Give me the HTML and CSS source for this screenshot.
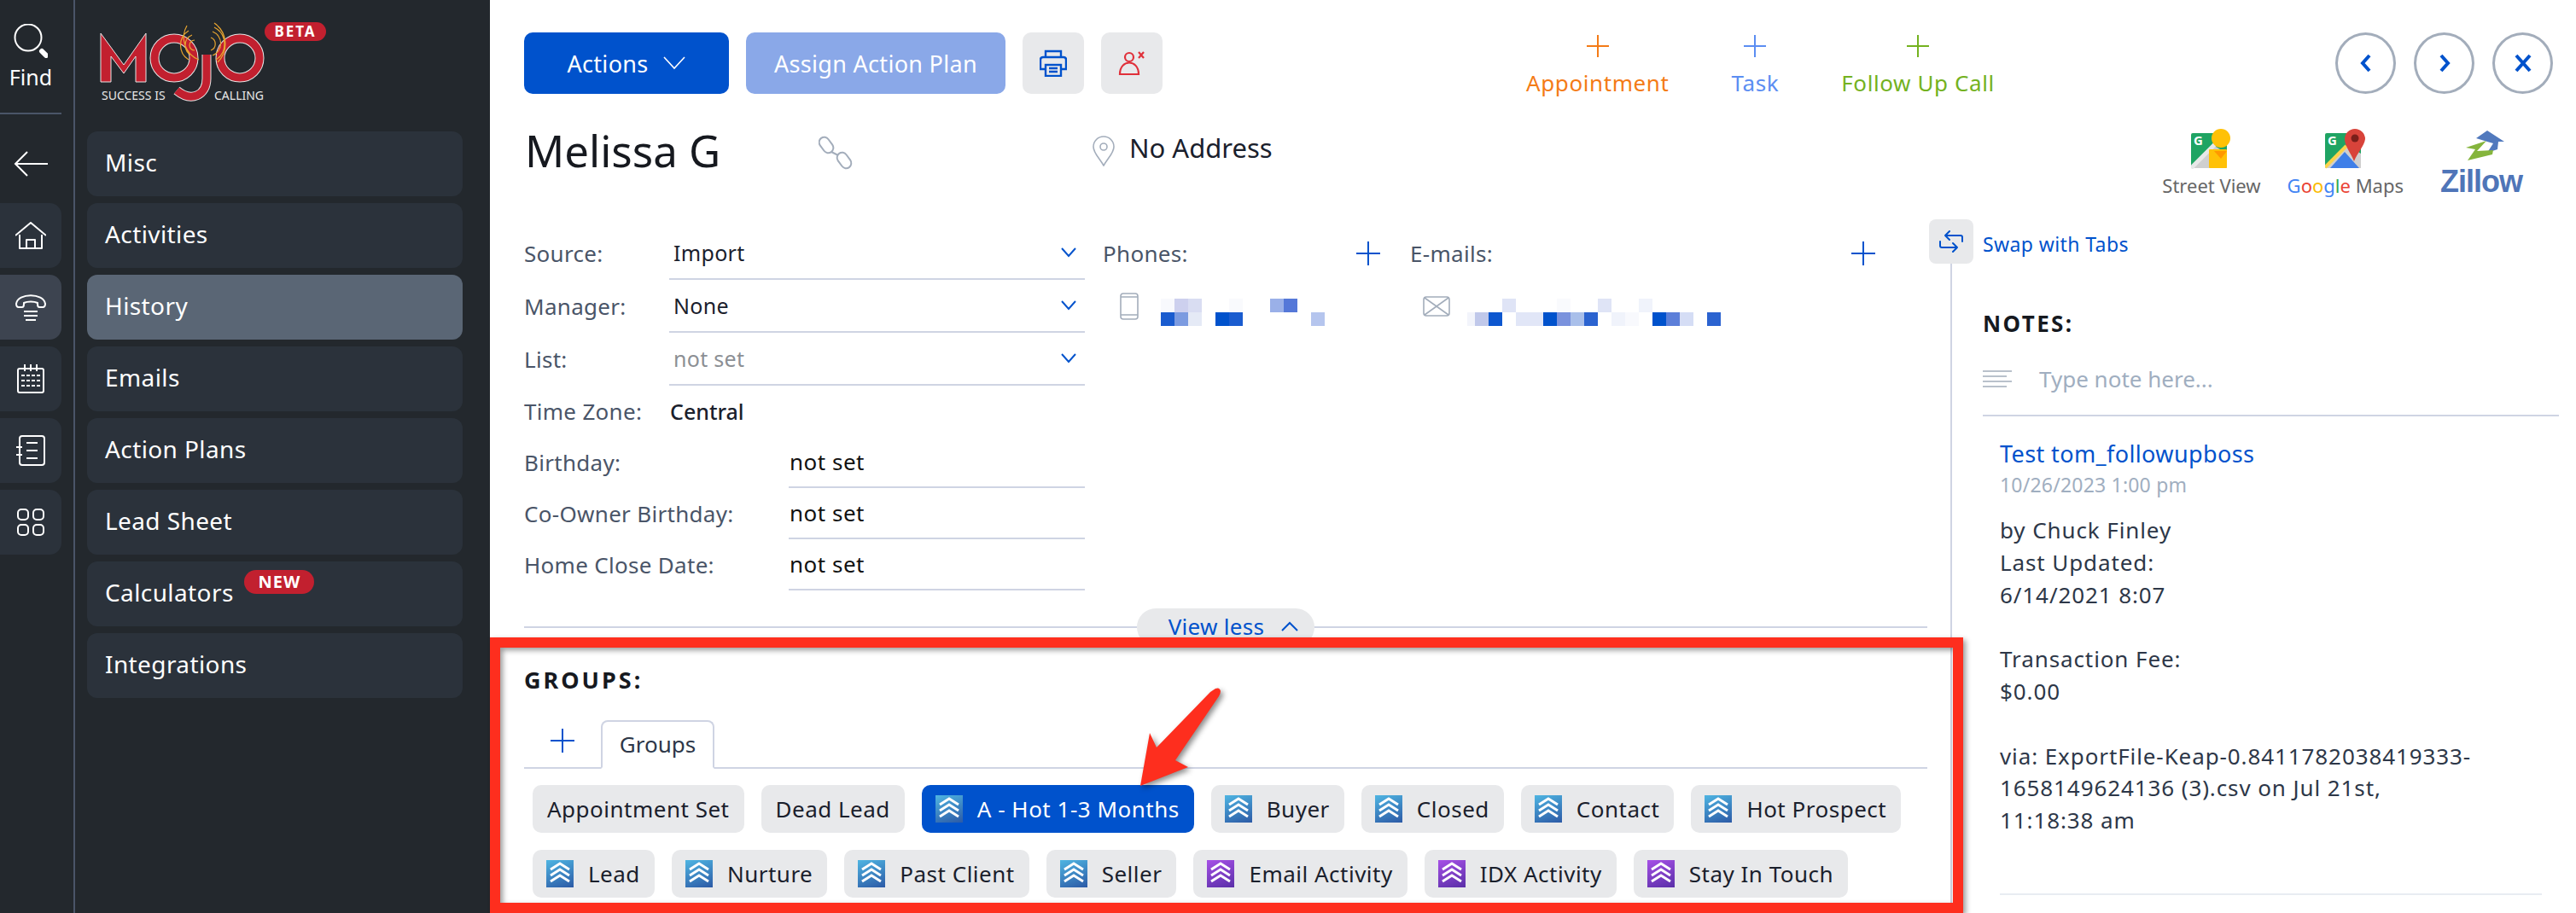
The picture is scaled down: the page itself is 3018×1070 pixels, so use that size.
FILE: index.html
```html
<!DOCTYPE html>
<html lang="en">
<head>
<meta charset="utf-8">
<title>Melissa G</title>
<link rel="stylesheet" href="styles.css">
</head>
<body>
<svg class="sprite" width="0" height="0"><symbol id="chev3" viewBox="0 0 32 32"><path d="M5 11L16 4l11 7M5 18l11-7 11 7M5 25l11-7 11 7" fill="none" stroke="#fff" stroke-width="3"/></symbol></svg>
<div class="app">
  <aside class="sidebar">
    <nav class="rail">
      <div class="find">
        <svg class="find-icon" width="40" height="40" viewBox="0 0 40 40" fill="none" stroke="#fff"><circle cx="17" cy="16" r="15.5" stroke-width="2"/><path d="M33 32l5 5" stroke-width="6" stroke-linecap="round"/></svg>
        <span>Find</span>
      </div>
      <div class="back">
        <svg width="40" height="30" viewBox="0 0 40 30" fill="none" stroke="#fff" stroke-width="2"><path d="M16 1L2 15l14 14M2 15h38"/></svg>
      </div>
      <div class="rail-btn">
        <svg width="36" height="32" viewBox="0 0 36 32" fill="none" stroke="#fff" stroke-width="2" stroke-linejoin="round"><path d="M0 16L18 1l18 15"/><path d="M5 15v16h26V15"/><path d="M13 31V21h10v10"/></svg>
      </div>
      <div class="rail-btn rail-active">
        <svg width="36" height="32" viewBox="0 0 36 32" fill="none" stroke="#fff" stroke-width="2" stroke-linejoin="round"><path d="M1 12C3-1 33-1 35 12c0 3-1 4-3 4h-4c-2 0-2-2-2-5-4-2-12-2-16 0 0 3 0 5-2 5H4c-2 0-3-1-3-4z"/><path d="M10 21h16M10 26h16M12 31h12"/></svg>
      </div>
      <div class="rail-btn">
        <svg width="32" height="34" viewBox="0 0 32 34" fill="none" stroke="#fff" stroke-width="2"><rect x="1" y="5" width="30" height="28" rx="2"/><path d="M9 0v8M16 0v8M23 0v8"/><path d="M5 13h22M5 19h22M5 25h22" stroke-dasharray="4 2"/></svg>
      </div>
      <div class="rail-btn">
        <svg width="34" height="36" viewBox="0 0 34 36" fill="none" stroke="#fff" stroke-width="2"><rect x="4" y="1" width="29" height="34" rx="3"/><path d="M0 14h7M0 23h7M12 9h13M12 18h13M12 27h13"/></svg>
      </div>
      <div class="rail-btn">
        <svg width="32" height="32" viewBox="0 0 32 32" fill="none" stroke="#fff" stroke-width="2"><rect x="1" y="1" width="12" height="12" rx="4"/><rect x="19" y="1" width="12" height="12" rx="4"/><rect x="1" y="19" width="12" height="12" rx="4"/><rect x="19" y="19" width="12" height="12" rx="4"/></svg>
      </div>
    </nav>
    <div class="menu">
      <div class="logo">
        <svg class="logo-mark" width="196" height="96" viewBox="0 0 196 96" fill="none">
          <g stroke="#e6e6e6" stroke-width="1">
            <path d="M1 13L28 50 54 13V70H42V40L28 60 13 40V70H1z" fill="#c2202f"/>
          </g>
          <circle cx="87" cy="42" r="23" stroke="#e6e6e6" stroke-width="11"/>
          <circle cx="87" cy="42" r="23" stroke="#c2202f" stroke-width="9"/>
          <circle cx="164" cy="42" r="23" stroke="#e6e6e6" stroke-width="11"/>
          <circle cx="164" cy="42" r="23" stroke="#c2202f" stroke-width="9"/>
          <path d="M125 38V66C125 86 107 94 90 80" stroke="#e6e6e6" stroke-width="11"/>
          <path d="M125 38V66C125 86 107 94 90 80" stroke="#c2202f" stroke-width="9"/>
          <g stroke="#e8a530" stroke-width="1.2">
            <path d="M111 21a6 6 0 0 0 0 12M108 15a13 13 0 0 0 0 24M104 10a20 20 0 0 0 0 34M102 4a28 28 0 0 0 14 40"/>
            <path d="M130 18a8 8 0 0 1 0 15M132 11a15 15 0 0 1 0 28M134 6a22 22 0 0 1 2 38M134 1a30 30 0 0 1 4 46"/>
          </g>
        </svg>
        <span class="tag-left">SUCCESS IS</span>
        <span class="tag-right">CALLING</span>
        <span class="beta">BETA</span>
      </div>
      <a class="menu-item">Misc</a>
      <a class="menu-item">Activities</a>
      <a class="menu-item menu-active">History</a>
      <a class="menu-item">Emails</a>
      <a class="menu-item">Action Plans</a>
      <a class="menu-item">Lead Sheet</a>
      <a class="menu-item">Calculators <span class="new">NEW</span></a>
      <a class="menu-item">Integrations</a>
    </div>
  </aside>

  <main class="main">
    <div class="toolbar">
      <button class="btn btn-primary">Actions
        <svg width="26" height="16" viewBox="0 0 26 16" fill="none" stroke="#fff" stroke-width="1.6"><path d="M1 1l12 13L25 1"/></svg>
      </button>
      <button class="btn btn-faded">Assign Action Plan</button>
      <button class="btn-square">
        <svg width="32" height="32" viewBox="0 0 32 32" fill="none" stroke="#0052cc" stroke-width="2.4"><path d="M7 9V2h18v7"/><path d="M7 23H1V12q0-3 3-3h24q3 0 3 3v11h-6"/><rect x="7" y="18" width="18" height="13"/><path d="M11 22h10M11 26h10"/></svg>
      </button>
      <button class="btn-square">
        <svg width="32" height="30" viewBox="0 0 32 30" fill="none" stroke="#e0303a" stroke-width="2.2"><circle cx="13" cy="8" r="5"/><path d="M2 28c0-18 22-18 22 0z"/><path d="M24 2l6 7M30 2l-6 7"/></svg>
      </button>
      <div class="quick">
        <div class="quick-item q-orange"><svg width="26" height="26" viewBox="0 0 26 26"><path d="M13 0v26M0 13h26"/></svg><span>Appointment</span></div>
        <div class="quick-item q-blue"><svg width="26" height="26" viewBox="0 0 26 26"><path d="M13 0v26M0 13h26"/></svg><span>Task</span></div>
        <div class="quick-item q-green"><svg width="26" height="26" viewBox="0 0 26 26"><path d="M13 0v26M0 13h26"/></svg><span>Follow Up Call</span></div>
      </div>
      <div class="pager">
        <button class="circle"><svg width="14" height="22" viewBox="0 0 14 22"><path d="M11 2L3 11l8 9"/></svg></button>
        <button class="circle"><svg width="14" height="22" viewBox="0 0 14 22"><path d="M3 2l8 9-8 9"/></svg></button>
        <button class="circle"><svg width="22" height="22" viewBox="0 0 22 22"><path d="M3 2l16 18M19 2L3 20"/></svg></button>
      </div>
    </div>

    <div class="head">
      <h1 class="name">Melissa G</h1>
      <svg class="link-icon" width="40" height="40" viewBox="0 0 40 40" fill="none" stroke="#a3adbb" stroke-width="2"><rect x="-6" y="-10" width="12" height="20" rx="6" transform="translate(9 11) rotate(-36)"/><rect x="-6" y="-10" width="12" height="20" rx="6" transform="translate(30 29) rotate(-36)"/><path d="M15 19l8 4"/></svg>
      <svg class="pin" width="28" height="36" viewBox="0 0 28 36" fill="none" stroke="#a3adbb" stroke-width="1.6"><path d="M14 35C8 25 2 20 2 13a12 12 0 0 1 24 0c0 7-6 12-12 22z"/><circle cx="14" cy="13" r="4"/></svg>
      <span class="address">No Address</span>
      <div class="maps">
        <div class="map-link">
          <svg width="47" height="47" viewBox="0 0 47 47"><rect y="5" width="42" height="41" rx="2" fill="#1fa463"/><path d="M0 44L26 19l16 10v17H2q-2 0-2-2z" fill="#cfcfcf"/><path d="M0 46L30 16" stroke="#e8e8e8" stroke-width="5"/><rect x="21" y="24" width="21" height="22" rx="1" fill="#ffc107"/><path d="M27 26h15l-7 9z" fill="#ff9800"/><circle cx="35" cy="11" r="11" fill="#ffc107"/><text class="g-letter" x="3" y="19">G</text></svg>
          <span class="map-label">Street View</span>
        </div>
        <div class="map-link">
          <svg width="47" height="47" viewBox="0 0 47 47"><rect y="5" width="42" height="41" rx="2" fill="#1fa463"/><path d="M0 44L26 19l16 10v17H2q-2 0-2-2z" fill="#cfcfcf"/><path d="M6 46l17-19 17 19z" fill="#3f7fe8"/><path d="M0 45L25 20" stroke="#fbd34b" stroke-width="4"/><path d="M35 38C31 28 24 20 24 12a12 12 0 0 1 24 0C47 20 39 28 35 38z" transform="translate(-1 0)" fill="#d8433a"/><circle cx="35" cy="11" r="4.5" fill="#7a1f1a"/><text class="g-letter" x="3" y="19">G</text></svg>
          <span class="map-label"><span class="g-b">G</span><span class="g-r">o</span><span class="g-y">o</span><span class="g-b">g</span><span class="g-g">l</span><span class="g-r">e</span> Maps</span>
        </div>
        <div class="map-link map-zillow">
          <svg class="zillow-mark" width="46" height="36" viewBox="0 0 46 36"><path d="M12 9L25 0l20 13h-7l-1 9-12 4 7-11-7-2z" fill="#5179bd"/><path d="M0 20L24 12 13 24l19-1-1 5L2 35l9-13z" fill="#85b53d"/></svg>
          <span class="zillow">Zillow</span>
        </div>
      </div>
    </div>

    <div class="content">
      <section class="details">
        <div class="fields">
          <div class="form">
            <div class="row"><span class="label">Source:</span><div class="select"><span>Import</span><svg class="chev" width="18" height="12" viewBox="0 0 18 12"><path d="M1 1l8 9 8-9"/></svg></div></div>
            <div class="row"><span class="label">Manager:</span><div class="select"><span>None</span><svg class="chev" width="18" height="12" viewBox="0 0 18 12"><path d="M1 1l8 9 8-9"/></svg></div></div>
            <div class="row"><span class="label">List:</span><div class="select is-empty"><span>not set</span><svg class="chev" width="18" height="12" viewBox="0 0 18 12"><path d="M1 1l8 9 8-9"/></svg></div></div>
            <div class="row row-s"><span class="label">Time Zone:</span><span class="plain">Central</span></div>
            <div class="row row-s"><span class="label label-w">Birthday:</span><div class="input">not set</div></div>
            <div class="row row-s"><span class="label label-w">Co-Owner Birthday:</span><div class="input">not set</div></div>
            <div class="row row-s"><span class="label label-w">Home Close Date:</span><div class="input">not set</div></div>
          </div>
          <div class="contact phones">
            <div class="contact-head"><span class="label">Phones:</span><svg class="plus-blue" width="28" height="28" viewBox="0 0 28 28"><path d="M14 0v28M0 14h28"/></svg></div>
            <div class="contact-row">
              <svg class="ic-phone" width="22" height="32" viewBox="0 0 22 32" fill="none" stroke="#a3adbb" stroke-width="1.6"><rect x="1" y="1" width="20" height="30" rx="3"/><path d="M1 5h20M1 26h20"/></svg>
              <svg width="192" height="32" viewBox="0 0 192 32"><rect x="0" width="16" height="16" fill="#f8f9fd"/><rect x="16" width="16" height="16" fill="#cdd0ee"/><rect x="32" width="16" height="16" fill="#d9ddf2"/><rect x="80" width="16" height="16" fill="#f9fafd"/><rect x="128" width="16" height="16" fill="#9ab0e8"/><rect x="144" width="16" height="16" fill="#5578d8"/><rect x="0" y="16" width="16" height="16" fill="#1a5ccf"/><rect x="16" y="16" width="16" height="16" fill="#7c9be0"/><rect x="32" y="16" width="16" height="16" fill="#e5eaf6"/><rect x="64" y="16" width="16" height="16" fill="#0052cc"/><rect x="80" y="16" width="16" height="16" fill="#1a5ccf"/><rect x="176" y="16" width="16" height="16" fill="#b5c5ee"/></svg>
            </div>
          </div>
          <div class="contact emails">
            <div class="contact-head"><span class="label">E-mails:</span><svg class="plus-blue" width="28" height="28" viewBox="0 0 28 28"><path d="M14 0v28M0 14h28"/></svg></div>
            <div class="contact-row">
              <svg class="ic-mail" width="32" height="24" viewBox="0 0 32 24" fill="none" stroke="#a3adbb" stroke-width="1.6"><rect x="1" y="1" width="30" height="22" rx="3"/><path d="M2 2l28 20M30 2L2 22"/></svg>
              <svg class="mosaic-mail" width="304" height="32" viewBox="0 0 304 32"><rect x="41" width="16" height="16" fill="#dfe4f6"/><rect x="105" width="16" height="16" fill="#f9fafd"/><rect x="153" width="16" height="16" fill="#dfe4f6"/><rect x="201" width="16" height="16" fill="#f0f3fb"/><rect x="0" y="16" width="9" height="16" fill="#f2f4fb"/><rect x="9" y="16" width="16" height="16" fill="#c0c8ea"/><rect x="25" y="16" width="16" height="16" fill="#0d57cf"/><rect x="57" y="16" width="32" height="16" fill="#e1e6f7"/><rect x="89" y="16" width="16" height="16" fill="#0052cc"/><rect x="105" y="16" width="16" height="16" fill="#7a92dd"/><rect x="121" y="16" width="16" height="16" fill="#a9bfea"/><rect x="137" y="16" width="16" height="16" fill="#2b63d0"/><rect x="169" y="16" width="16" height="16" fill="#f0f3fb"/><rect x="185" y="16" width="16" height="16" fill="#f8f9fd"/><rect x="217" y="16" width="16" height="16" fill="#0052cc"/><rect x="233" y="16" width="16" height="16" fill="#5c7fd9"/><rect x="249" y="16" width="16" height="16" fill="#d5ddf5"/><rect x="281" y="16" width="16" height="16" fill="#2b63d0"/></svg>
            </div>
          </div>
        </div>

        <div class="divider">
          <span class="rule"></span>
          <button class="viewless">View less <svg width="20" height="12" viewBox="0 0 20 12" fill="none" stroke="#0052cc" stroke-width="2"><path d="M1 11l9-9 9 9"/></svg></button>
          <span class="rule"></span>
        </div>

        <h2 class="section-title">GROUPS:</h2>
        <div class="tabs">
          <svg class="plus-blue tab-plus" width="28" height="28" viewBox="0 0 28 28"><path d="M14 0v28M0 14h28"/></svg>
          <div class="tab">Groups</div>
        </div>
        <div class="chips">
          <span class="chip">Appointment Set</span>
          <span class="chip">Dead Lead</span>
          <span class="chip chip-on"><svg class="badge"><use href="#chev3"/></svg>A - Hot 1-3 Months</span>
          <span class="chip"><svg class="badge"><use href="#chev3"/></svg>Buyer</span>
          <span class="chip"><svg class="badge"><use href="#chev3"/></svg>Closed</span>
          <span class="chip"><svg class="badge"><use href="#chev3"/></svg>Contact</span>
          <span class="chip"><svg class="badge"><use href="#chev3"/></svg>Hot Prospect</span>
          <span class="chip"><svg class="badge"><use href="#chev3"/></svg>Lead</span>
          <span class="chip"><svg class="badge"><use href="#chev3"/></svg>Nurture</span>
          <span class="chip"><svg class="badge"><use href="#chev3"/></svg>Past Client</span>
          <span class="chip"><svg class="badge"><use href="#chev3"/></svg>Seller</span>
          <span class="chip"><svg class="badge badge-p"><use href="#chev3"/></svg>Email Activity</span>
          <span class="chip"><svg class="badge badge-p"><use href="#chev3"/></svg>IDX Activity</span>
          <span class="chip"><svg class="badge badge-p"><use href="#chev3"/></svg>Stay In Touch</span>
        </div>
      </section>

      <aside class="side">
        <div class="swap">
          <span class="swap-btn"><svg width="30" height="26" viewBox="0 0 30 26" fill="none" stroke="#0052cc" stroke-width="2" stroke-linecap="round" stroke-linejoin="round"><path d="M28 13V8q0-2-2-2H8M13 1L8 6l5 5"/><path d="M2 13v5q0 2 2 2h18M17 15l5 5-5 5"/></svg></span>
          <a class="swap-text">Swap with Tabs</a>
        </div>
        <div class="notes">
          <h2 class="notes-title">NOTES:</h2>
          <div class="note-input">
            <svg width="34" height="20" viewBox="0 0 34 20" stroke="#a3adbb" stroke-width="1.6"><path d="M0 1h34M0 7h28M0 13h34M0 19h28"/></svg>
            <span>Type note here...</span>
          </div>
          <article class="note">
            <a class="note-author">Test tom_followupboss</a>
            <div class="note-date">10/26/2023 1:00 pm</div>
            <p class="note-body">by Chuck Finley<br>Last Updated:<br>6/14/2021 8:07<br><br>Transaction Fee:<br>$0.00<br><br>via: ExportFile-Keap-0.8411782038419333-1658149624136 (3).csv on Jul 21st, 11:18:38 am</p>
          </article>
        </div>
      </aside>
    </div>
  </main>

  <div class="red-frame"></div>
  <svg class="red-arrow" width="110" height="120" viewBox="0 0 110 120"><path d="M93 4q5-2 6 3 0 3-2 6L46 88 61 96 5 118 16 56l8 17L87 8z" fill="#fe2e1e"/></svg>
</div>
</body>
</html>
```

FILE: styles.css
```css
* { box-sizing: border-box; }
html, body { margin: 0; padding: 0; background: #fff; }
body { font-family: "Noto Sans", "Open Sans", sans-serif; color: #1a202c; }
button { font: inherit; border: 0; padding: 0; }
h1, h2, p { margin: 0; font-weight: normal; }
svg { display: block; flex: none; }
.sprite { position: absolute; }

.app { position: relative; display: flex; width: 3018px; height: 1070px; overflow: hidden; }

/* sidebar */
.sidebar { display: flex; flex: none; width: 574px; height: 100%; background: #23282d; color: #fff; }
.rail { flex: none; width: 88px; padding-right: 14px; border-right: 2px solid #4a5568; }
.find { display: flex; flex-direction: column; align-items: center; height: 134px; padding-top: 28px; border-bottom: 2px solid #4a5568; font-size: 25px; line-height: 30px; }
.find-icon { margin-bottom: 7px; }
.back { display: flex; align-items: center; justify-content: center; height: 104px; padding-top: 12px; }
.rail-btn { display: flex; align-items: center; justify-content: center; height: 76px; margin-bottom: 8px; background: #2b323b; border-radius: 0 14px 14px 0; }
.rail-active { background: #3d4450; }

.menu { flex: none; width: 440px; margin-left: 14px; }
.logo { position: relative; height: 154px; }
.logo-mark { position: absolute; left: 15px; top: 26px; }
.tag-left, .tag-right { position: absolute; top: 104px; font-size: 14px; line-height: 16px; color: #e8e8e8; white-space: nowrap; }
.tag-left { left: 17px; }
.tag-right { left: 149px; }
.beta { position: absolute; left: 208px; top: 26px; width: 72px; height: 22px; border-radius: 11px; background: #c2202f; font-size: 17px; font-weight: 700; line-height: 22px; letter-spacing: 2px; text-align: center; }
.menu-item { display: flex; align-items: center; height: 76px; margin-bottom: 8px; padding: 0 0 4px 21px; border-radius: 12px; background: #2b323b; font-size: 28px; letter-spacing: .4px; white-space: pre; }
.menu-active { background: #5a6675; }
.new { height: 28px; margin: 0 0 25px 5px; padding: 0 16px; border-radius: 14px; background: #c2202f; font-size: 20px; font-weight: 700; line-height: 28px; letter-spacing: 1px; }

/* main */
.main { flex: 1; min-width: 0; padding: 38px 0 0 40px; }
.toolbar { display: flex; align-items: flex-start; height: 72px; }
.btn { display: flex; align-items: center; justify-content: center; height: 72px; border-radius: 10px; color: #fff; font-size: 27px; letter-spacing: .3px; }
.btn-primary { width: 240px; margin-right: 20px; background: #0052cc; gap: 18px; }
.btn-faded { width: 304px; margin-right: 20px; background: #8aa8e8; }
.btn-square { display: flex; align-items: center; justify-content: center; width: 72px; height: 72px; margin-right: 20px; border-radius: 10px; background: #e8e9eb; }
.quick { display: flex; gap: 73px; margin-left: 406px; padding-top: 3px; }
.quick-item { display: flex; flex-direction: column; align-items: center; gap: 12px; font-size: 26px; line-height: 36px; letter-spacing: .6px; }
.quick-item path { fill: none; stroke: currentColor; stroke-width: 2; }
.q-orange { color: #f47b16; }
.q-blue { color: #5b8df2; }
.q-green { color: #74b21f; }
.pager { display: flex; gap: 21px; margin-left: auto; padding-right: 27px; }
.circle { display: flex; align-items: center; justify-content: center; width: 71px; height: 72px; border: 3px solid #a3adbb; border-radius: 50%; background: #fff; }
.circle path { fill: none; stroke: #0052cc; stroke-width: 4; }

.head { display: flex; align-items: flex-start; height: 147px; }
.name { width: 345px; margin-top: 36px; padding-left: 1px; font-size: 51px; line-height: 60px; color: #16191f; }
.link-icon { margin-top: 49px; }
.pin { margin: 49px 16px 0 280px; }
.address { margin-top: 44px; font-size: 31px; line-height: 38px; }
.maps { display: flex; align-items: flex-start; margin-left: auto; padding: 41px 63px 0 0; }
.map-link { display: flex; flex-direction: column; align-items: center; margin-left: 31px; }
.map-zillow { margin-left: 43px; }
.map-label { margin-top: 4px; font-family: "Noto Sans", sans-serif; font-size: 22px; line-height: 30px; color: #666; white-space: nowrap; }
.g-letter { font-family: "Noto Sans", sans-serif; font-size: 15px; font-weight: 700; fill: #fff; }
.g-b { color: #4285f4; }
.g-r { color: #ea4335; }
.g-y { color: #fbbc05; }
.g-g { color: #34a853; }
.zillow-mark { margin: 2px 0 6px 10px; }
.zillow { font-family: "Liberation Sans", sans-serif; font-size: 36px; font-weight: 700; line-height: 36px; letter-spacing: -1px; color: #4f75b8; }

.content { display: flex; }
.details { flex: none; width: 1644px; padding-top: 9px; }
.fields { display: flex; height: 426px; }
.form { flex: none; width: 657px; }
.row { display: flex; align-items: stretch; height: 62px; font-size: 26px; letter-spacing: .3px; }
.row-s { height: 60px; }
.label { display: flex; align-items: center; width: 170px; color: #4a5568; white-space: nowrap; }
.label-w { width: 310px; }
.select { display: flex; flex: 1; align-items: center; justify-content: space-between; padding: 0 10px 0 5px; border-bottom: 2px solid #cfd4e3; color: #1a202c; font-size: 25px; }
.is-empty { color: #8c8f94; }
.chev path { fill: none; stroke: #0052cc; stroke-width: 2; }
.plain { display: flex; align-items: center; margin-left: 1px; font-size: 25px; font-weight: 500; letter-spacing: 0; }
.input { display: flex; flex: 1; align-items: center; padding-left: 1px; border-bottom: 2px solid #cfd4e3; color: #111; letter-spacing: .5px; }

.contact-head { display: flex; align-items: center; justify-content: space-between; height: 62px; }
.contact-head .label { width: auto; font-size: 26px; letter-spacing: .3px; }
.plus-blue path { fill: none; stroke: #0052cc; stroke-width: 2; }
.contact-row { display: flex; align-items: flex-start; margin-top: 15px; }
.phones { flex: none; width: 325px; margin-left: 21px; }
.phones .contact-row { padding-left: 20px; }
.phones .ic-phone { margin-right: 26px; }
.phones .contact-row svg + svg { margin-top: 7px; }
.emails { flex: none; width: 545px; margin-left: 35px; }
.emails .contact-row { padding-left: 15px; }
.ic-mail { margin: 4px 20px 0 0; }
.mosaic-mail { margin-top: 7px; }

.divider { display: flex; align-items: center; height: 44px; margin-top: 21px; }
.rule { flex: 1; height: 2px; background: #cfd4e3; }
.viewless { display: flex; align-items: center; justify-content: center; gap: 20px; width: 208px; height: 44px; padding: 0 0 2px 18px; border-radius: 22px; background: #e8e9eb; color: #0052cc; font-size: 26px; letter-spacing: .3px; }
.section-title { margin-top: 25px; font-size: 27px; font-weight: 700; line-height: 30px; letter-spacing: 3px; color: #16191f; }
.tabs { display: flex; align-items: flex-end; height: 57px; margin-top: 32px; border-bottom: 2px solid #cfd4e3; }
.tab-plus { margin: 0 31px 17px 31px; }
.tab { width: 133px; height: 57px; margin-bottom: -2px; border: 2px solid #cfd4e3; border-bottom-color: #fff; border-radius: 8px 8px 0 0; background: #fff; font-size: 26px; line-height: 53px; text-align: center; color: #2d3748; }
.chips { display: flex; flex-wrap: wrap; gap: 20px; margin-top: 19px; padding-left: 10px; }
.chip { display: flex; align-items: center; height: 56px; padding: 0 17px; border-radius: 10px; background: #e8e9eb; font-size: 26px; letter-spacing: .5px; white-space: nowrap; }
.chip-on { background: #0052cc; color: #fff; }
.badge { width: 32px; height: 32px; margin: 0 17px 0 -1px; background: linear-gradient(160deg, #4fb5e2, #2c5aa6); }
.badge-p { background: linear-gradient(160deg, #a650e6, #5a2fa8); }

/* notes */
.side { flex: none; width: 738px; margin-left: 2px; }
.swap { display: flex; align-items: center; gap: 11px; height: 52px; }
.swap-btn { display: flex; align-items: center; justify-content: center; width: 52px; height: 52px; border-radius: 8px; background: #e8e9eb; }
.swap-text { color: #0052cc; font-size: 23px; letter-spacing: .4px; padding-top: 6px; }
.notes { min-height: 800px; margin-left: 25px; padding: 50px 0 0 36px; border-left: 2px solid #cfd4e3; }
.notes-title { font-size: 26px; font-weight: 700; line-height: 40px; letter-spacing: 2.4px; color: #16191f; }
.note-input { display: flex; align-items: center; gap: 32px; height: 89px; padding-top: 2px; border-bottom: 2px solid #cfd4e3; font-size: 26px; color: #a0aec0; }
.note { margin: 22px 20px 0 20px; padding-bottom: 66px; border-bottom: 2px solid #e8ecf2; font-size: 26px; letter-spacing: .9px; }
.note-author { display: block; color: #0052cc; font-size: 27px; letter-spacing: .4px; line-height: 44px; }
.note-date { color: #a0aec0; font-size: 23px; letter-spacing: .2px; line-height: 28px; }
.note-body { margin-top: 21px; padding-right: 76px; line-height: 37.8px; color: #2d3748; }

/* annotation overlay */
.red-frame { position: absolute; left: 574px; top: 747px; width: 1726px; height: 323px; border: 12px solid #fe2e1e; filter: drop-shadow(3px 3px 3px rgba(0,0,0,.4)); pointer-events: none; }
.red-arrow { position: absolute; left: 1331px; top: 803px; filter: drop-shadow(3px 3px 3px rgba(0,0,0,.45)); pointer-events: none; }
```
